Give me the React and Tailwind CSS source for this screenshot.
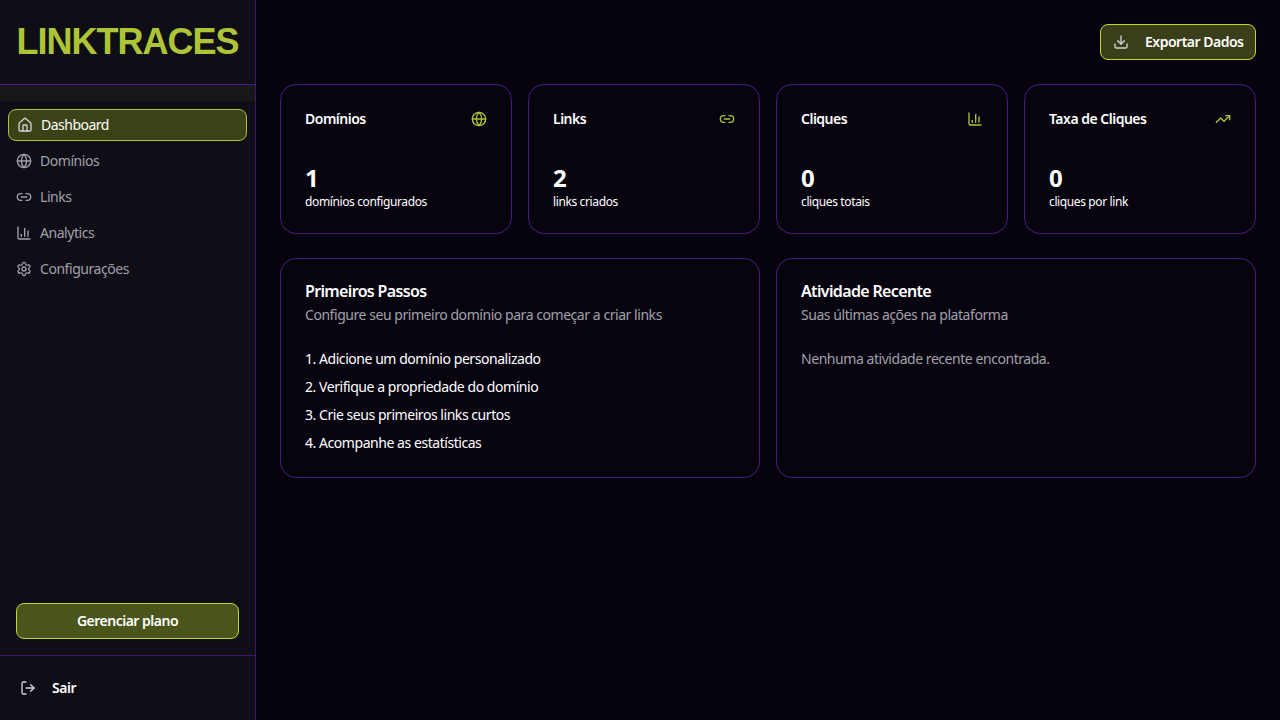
import { House, Globe, Link2, ChartColumn, Settings, LogOut, Download, TrendingUp } from "lucide-react";

const navItems = [
  { label: "Domínios", icon: Globe },
  { label: "Links", icon: Link2 },
  { label: "Analytics", icon: ChartColumn },
  { label: "Configurações", icon: Settings },
];

const stats = [
  { title: "Domínios", icon: Globe, value: "1", note: "domínios configurados" },
  { title: "Links", icon: Link2, value: "2", note: "links criados" },
  { title: "Cliques", icon: ChartColumn, value: "0", note: "cliques totais" },
  { title: "Taxa de Cliques", icon: TrendingUp, value: "0", note: "cliques por link" },
];

const steps = [
  "1. Adicione um domínio personalizado",
  "2. Verifique a propriedade do domínio",
  "3. Crie seus primeiros links curtos",
  "4. Acompanhe as estatísticas",
];

function Sidebar() {
  return (
    <aside className="flex h-screen w-[256px] shrink-0 flex-col border-r border-[#3b1a6e] bg-[#0f0d15]">
      <div className="flex h-[85px] items-center justify-center border-b border-[#4a1c8a]">
        <span className="text-[36px] leading-none font-bold tracking-[-1px] text-[#adc437] font-['Liberation_Sans',sans-serif]">
          LINKTRACES
        </span>
      </div>
      <div className="h-4 bg-[#18181b]"></div>
      <nav className="flex flex-1 flex-col gap-1 px-2 pt-2">
        <a className="flex h-8 items-center gap-2 rounded-lg border border-[#adc437] bg-[#3c4217] pl-2 text-sm tracking-[-0.5px] text-white">
          <House size={16} className="text-[#d4d4d8]" />
          <span>Dashboard</span>
        </a>
        {navItems.map((item) => (
          <a key={item.label} className="flex h-8 items-center gap-2 pl-2 text-sm text-[#a1a1aa]">
            <item.icon size={16} />
            <span>{item.label}</span>
          </a>
        ))}
      </nav>
      <div className="px-4 pb-4">
        <button className="h-9 w-full rounded-lg border border-[#c3d82f] bg-[#4a551c] text-sm font-semibold tracking-[-0.5px] text-white">
          Gerenciar plano
        </button>
      </div>
      <div className="flex h-[65px] items-center gap-4 border-t border-[#3b1a6e] pl-5 text-sm font-semibold text-white">
        <LogOut size={16} className="text-[#d4d4d8]" />
        <span>Sair</span>
      </div>
    </aside>
  );
}

function StatCard({ stat }) {
  return (
    <div className="flex h-[150px] flex-col rounded-2xl border border-[#471c85] bg-[#07040f] p-6">
      <div className="flex h-5 items-center justify-between">
        <span className="text-sm font-semibold tracking-[-0.5px] text-white">{stat.title}</span>
        <stat.icon size={16} className="text-[#adc437]" />
      </div>
      <div className="mt-[33px] text-2xl leading-8 font-bold text-white">{stat.value}</div>
      <div className="text-xs leading-4 tracking-[-0.38px] text-white">{stat.note}</div>
    </div>
  );
}

export default function App() {
  return (
    <div className="flex h-screen overflow-hidden bg-[#06030f] font-['Noto_Sans',sans-serif] tracking-[-0.45px]">
      <Sidebar />
      <main className="flex-1 px-6 pt-6">
        <div className="flex justify-end">
          <button className="flex h-9 w-[156px] items-center gap-4 rounded-lg border border-[#c3d82f] bg-[#3a3f19] pl-3 text-sm font-semibold tracking-[-0.5px] text-white">
            <Download size={16} className="text-[#d4d4d8]" />
            <span>Exportar Dados</span>
          </button>
        </div>
        <div className="mt-6 grid grid-cols-4 gap-4">
          {stats.map((stat) => (
            <StatCard key={stat.title} stat={stat} />
          ))}
        </div>
        <div className="mt-6 grid grid-cols-2 gap-4">
          <div className="h-[220px] rounded-2xl border border-[#471c85] bg-[#07040f] p-6">
            <h3 className="text-base leading-4 font-semibold tracking-[-0.65px] text-white">Primeiros Passos</h3>
            <p className="mt-1.5 text-sm leading-5 text-[#a1a1aa]">
              Configure seu primeiro domínio para começar a criar links
            </p>
            <ul className="mt-6 flex flex-col gap-2 text-sm leading-5 text-white">
              {steps.map((step) => (
                <li key={step}>{step}</li>
              ))}
            </ul>
          </div>
          <div className="h-[220px] rounded-2xl border border-[#471c85] bg-[#07040f] p-6">
            <h3 className="text-base leading-4 font-semibold tracking-[-0.65px] text-white">Atividade Recente</h3>
            <p className="mt-1.5 text-sm leading-5 text-[#a1a1aa]">Suas últimas ações na plataforma</p>
            <p className="mt-6 text-sm leading-5 text-[#a1a1aa]">Nenhuma atividade recente encontrada.</p>
          </div>
        </div>
      </main>
    </div>
  );
}
